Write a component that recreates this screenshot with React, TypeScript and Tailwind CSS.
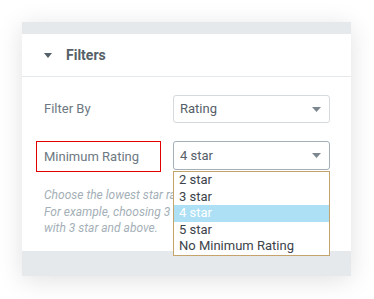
function Caret() {
  return (
    <svg width="9" height="5" viewBox="0 0 9 5" className="text-[#7d8790]">
      <path d="M0 0H9L4.5 5Z" fill="currentColor" />
    </svg>
  );
}

function SelectBox({ value, active }: { value: string; active?: boolean }) {
  return (
    <div
      className={
        active
          ? 'flex h-[29px] w-[157px] items-center justify-between rounded-[3px] border border-[#a4afb7] pl-[6px] pr-[8px]'
          : 'flex h-[28px] w-[157px] items-center justify-between rounded-[3px] border border-[#d5dadf] pl-[6px] pr-[8px]'
      }
    >
      <span className="text-[13px] text-[#556068]">{value}</span>
      <Caret />
    </div>
  );
}

const options = ['2 star', '3 star', '4 star', '5 star', 'No Minimum Rating'];

export default function App() {
  return (
    <div className="h-[299px] w-[374px] bg-white pl-[22px] pt-[22px] font-['Roboto',sans-serif]">
      <div className="relative flex h-[254px] w-[329px] flex-col bg-white shadow-[0_4px_24px_rgba(0,0,0,0.12)]">
        <div className="h-[12px] bg-[#e6e9ec]" />
        <div className="flex h-[43px] items-center gap-[14px] border-b border-[#e6e9ec] pl-[22px]">
          <svg width="8" height="5" viewBox="0 0 8 5" className="text-[#556068]">
            <path d="M0 0H8L4 5Z" fill="currentColor" />
          </svg>
          <span className="text-[14px] font-bold text-[#556068]">Filters</span>
        </div>

        <div className="flex flex-1 flex-col pt-[18px]">
          <div className="flex items-center justify-between pl-[22px] pr-[21px]">
            <span className="text-[13px] text-[#6d7882]">Filter By</span>
            <SelectBox value="Rating" />
          </div>
          <div className="mt-[18px] flex items-start justify-between pl-[14px] pr-[21px]">
            <div className="flex h-[31px] w-[125px] items-center border border-[#e00000] pl-[7px]">
              <span className="text-[13px] text-[#6d7882]">Minimum Rating</span>
            </div>
            <SelectBox value="4 star" active />
          </div>
          <p className="mt-[15px] whitespace-nowrap pl-[22px] text-[12px] italic leading-[16.5px] text-[#a4afb7]">
            Choose the lowest star rating to be shown.
            <br />
            For example, choosing 3 star will show products
            <br />
            with 3 star and above.
          </p>
        </div>

        <div className="h-[25px] bg-[#e6e9ec]" />

        <ul className="absolute left-[151px] top-[149px] w-[157px] border border-[#c4a46c] bg-white">
          {options.map((o) => (
            <li
              key={o}
              className={
                o === '4 star'
                  ? 'h-[16.6px] bg-[#ade0f5] pl-[5px] text-[13px] leading-[16.6px] text-white'
                  : 'h-[16.6px] pl-[5px] text-[13px] leading-[16.6px] text-[#3c434a]'
              }
            >
              {o}
            </li>
          ))}
        </ul>
      </div>
    </div>
  );
}
